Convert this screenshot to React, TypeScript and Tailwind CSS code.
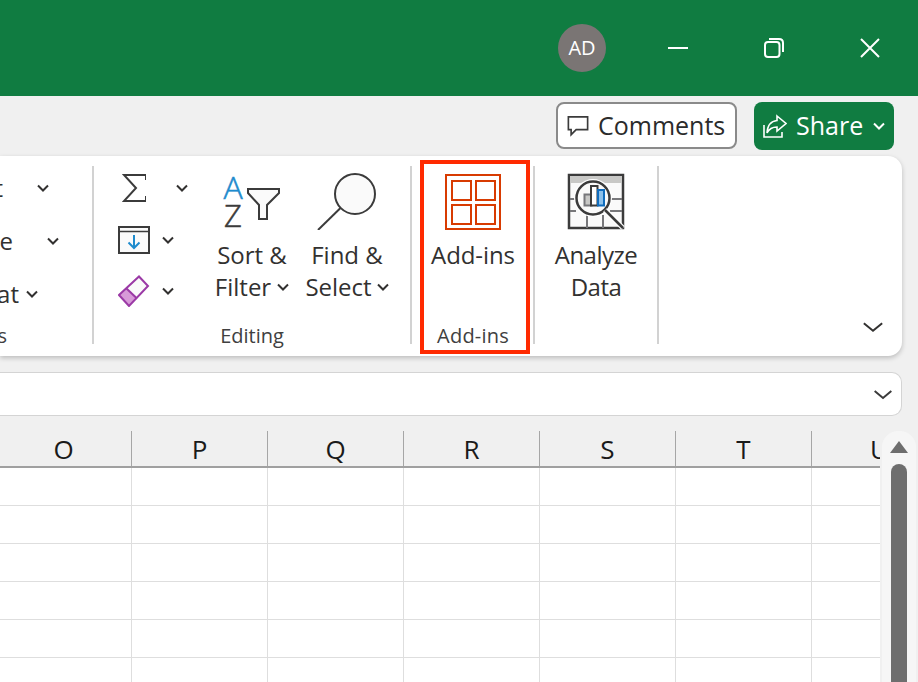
const COLS = ["O", "P", "Q", "R", "S", "T", "U"];
const ROWS = [0, 1, 2, 3, 4, 5];

function Chevron({ className = "" }: { className?: string }) {
  return (
    <svg viewBox="0 0 12 8" preserveAspectRatio="none" className={`w-3 h-2 shrink-0 ${className}`} fill="none" stroke="currentColor" strokeWidth="2">
      <path d="M1 1.5 6 6.5 11 1.5" vectorEffect="non-scaling-stroke" />
    </svg>
  );
}

function Sep() {
  return <div className="w-[2px] h-[178px] mt-[10px] shrink-0 bg-[#d2d2d2]" />;
}

function SigmaIcon() {
  return (
    <svg viewBox="0 0 24 30" className="w-6 h-[30px]" fill="none" stroke="#3b3b3b" strokeWidth="2">
      <path d="M24 7V2H2L14 15 2 28H24V23" />
    </svg>
  );
}

function FillIcon() {
  return (
    <svg viewBox="0 0 32 28" className="w-8 h-7" fill="none">
      <rect x="1" y="1" width="30" height="26" fill="#fafafa" stroke="#3b3b3b" strokeWidth="2" />
      <path d="M1 5.5H31" stroke="#3b3b3b" strokeWidth="1.5" />
      <path d="M16 9V22M10.5 16.5 16 22 21.5 16.5" stroke="#1e8bcd" strokeWidth="2" />
    </svg>
  );
}

function EraserIcon() {
  return (
    <svg viewBox="0 0 32 32" className="w-8 h-8" fill="none">
      <path d="M8 13 21 1.5 30 11 19 23Z" fill="#fafafa" />
      <path d="M1 20 8 13 19 23 11 31Z" fill="#d79ad8" />
      <path d="M1 20 21 1.5 30 11 11 31Z" stroke="#9b3aa6" strokeWidth="2" />
      <path d="M8 13 19 23.5" stroke="#9b3aa6" strokeWidth="2" />
    </svg>
  );
}

function SortIcon() {
  return (
    <svg viewBox="0 0 60 58" className="w-[60px] h-[58px]">
      <text x="11" y="27" textAnchor="middle" fontSize="32" fontWeight="300" stroke="#1e8bcd" strokeWidth="0.5" fontFamily="Open Sans, sans-serif" fill="#1e8bcd">A</text>
      <text x="11" y="55" textAnchor="middle" fontSize="31" fontWeight="300" stroke="#3b3b3b" strokeWidth="0.5" fontFamily="Open Sans, sans-serif" fill="#3b3b3b">Z</text>
      <path d="M26 17H57V21L45 33V47H37V33L26 21Z" fill="#fafafa" stroke="#3b3b3b" strokeWidth="2" />
    </svg>
  );
}

function FindIcon() {
  return (
    <svg viewBox="0 0 60 58" className="w-[60px] h-[58px]" fill="none" stroke="#3b3b3b" strokeWidth="2">
      <circle cx="38" cy="22" r="20" fill="#fafafa" />
      <path d="M23.5 36 1 58" />
    </svg>
  );
}

function AddinsIcon() {
  return (
    <svg viewBox="0 0 56 56" className="w-14 h-14" fill="none" stroke="#d83b01" strokeWidth="2">
      <rect x="1" y="1" width="54" height="54" />
      <rect x="7" y="7" width="19" height="19" />
      <rect x="31" y="7" width="19" height="19" />
      <rect x="7" y="31" width="19" height="19" />
      <rect x="31" y="31" width="19" height="19" />
    </svg>
  );
}

function AnalyzeIcon() {
  return (
    <svg viewBox="0 0 58 58" className="w-[58px] h-[58px]" fill="none">
      <rect x="2" y="2" width="54" height="53" fill="#fafafa" stroke="#3b3b3b" strokeWidth="2.5" />
      <rect x="3" y="3" width="52" height="7" fill="#c8c8c6" />
      <path d="M3 26H9M43 26H55M3 38H9M43 38H55M20 42V55M36 42V55" stroke="#77777a" strokeWidth="2" />
      <circle cx="26" cy="25" r="19" fill="#fff" />
      <circle cx="26" cy="25" r="16.5" fill="#fafafa" stroke="#3b3b3b" strokeWidth="2.5" />
      <path d="M38 37 56 55" stroke="#fff" strokeWidth="5" />
      <path d="M38 37 56 55" stroke="#3b3b3b" strokeWidth="2.5" />
      <rect x="17.5" y="21.5" width="7" height="11" fill="#c8c8c6" stroke="#77777a" strokeWidth="2" />
      <rect x="24" y="13" width="6.5" height="19.5" fill="#fff" stroke="#3b3b3b" strokeWidth="2" />
      <rect x="31" y="17" width="6" height="15.5" fill="#8cc0ea" stroke="#0f6cbd" strokeWidth="2" />
    </svg>
  );
}

function TitleBar() {
  return (
    <div className="h-24 bg-[#107c41] flex justify-end items-center text-white">
      <div className="w-24 flex justify-center">
        <div className="w-12 h-12 rounded-full bg-[#7a7574] flex items-center justify-center text-[20px]">AD</div>
      </div>
      <div className="w-24 flex justify-center">
        <div className="w-5 h-[2px] bg-white" />
      </div>
      <div className="w-24 flex justify-center">
        <svg viewBox="0 0 20 20" className="w-5 h-5" fill="none" stroke="#fff" strokeWidth="2">
          <rect x="1" y="4" width="14.5" height="15" rx="3" />
          <path d="M5 1H15C17.5 1 19 2.5 19 5V14" />
        </svg>
      </div>
      <div className="w-24 flex justify-center">
        <svg viewBox="0 0 20 20" className="w-5 h-5" fill="none" stroke="#fff" strokeWidth="2">
          <path d="M1 1 19 19M19 1 1 19" />
        </svg>
      </div>
    </div>
  );
}

function ActionRow() {
  return (
    <div className="h-[60px] flex justify-end items-start gap-[17px] pt-[6px] pr-6">
      <button className="w-[181px] h-[47px] rounded-lg border-2 border-[#8a8a8a] bg-white flex items-center gap-[9px] pl-[9px] text-[25px] text-[#2b2b2b]">
        <svg viewBox="0 0 24 24" className="w-[22px] h-[22px] shrink-0" fill="none" stroke="#3b3b3b" strokeWidth="1.8">
          <path d="M1.5 2H22.5V16H10L4.5 21.5V16H1.5Z" />
        </svg>
        Comments
      </button>
      <button className="w-[140px] h-12 rounded-lg bg-[#107c41] flex items-center pl-[9px] text-[25px] text-white">
        <svg viewBox="0 0 24 24" className="w-6 h-6 shrink-0 mr-[9px]" fill="none" stroke="#fff" strokeWidth="1.6">
          <path d="M1 11V23H19V18M14 2 23 9.5 14 17V13C9 13 6 15 4 19 4.5 12 8 7 14 6.5Z" />
        </svg>
        Share
        <Chevron className="ml-[10px]" />
      </button>
    </div>
  );
}

function LeftGroup() {
  return (
    <div className="w-[92px] shrink-0 overflow-hidden flex flex-col items-end">
      <div className="h-[156px] pt-4 flex flex-col gap-[21px] w-full">
        <div className="h-8 flex items-center justify-end gap-[34px] pr-[43px] whitespace-nowrap">
          Insert
          <Chevron />
        </div>
        <div className="h-8 flex items-center justify-end gap-[34px] pr-[33px] whitespace-nowrap">
          Delete
          <Chevron />
        </div>
        <div className="h-8 flex items-center justify-end gap-[7px] pr-[54px] whitespace-nowrap">
          Format
          <Chevron />
        </div>
      </div>
      <div className="w-full pr-[85px] flex justify-end whitespace-nowrap text-[20px] leading-5 text-[#404040] pt-[14px]">Cells</div>
    </div>
  );
}

function EditingGroup() {
  return (
    <div className="w-[316px] shrink-0 flex flex-col">
      <div className="h-[170px] flex pt-[16px]">
        <div className="w-[112px] pl-6 flex flex-col">
          <div className="h-[32px] flex items-center pl-1">
            <SigmaIcon />
            <Chevron className="ml-[30px]" />
          </div>
          <div className="h-[30px] mt-[21px] flex items-center">
            <FillIcon />
            <Chevron className="ml-[12px]" />
          </div>
          <div className="h-[32px] mt-[20px] flex items-center">
            <EraserIcon />
            <Chevron className="ml-[12px]" />
          </div>
        </div>
        <div className="w-[92px] flex flex-col items-center">
          <SortIcon />
          <div className="mt-[9px] leading-8 text-center">
            Sort &amp;
            <div className="flex items-center justify-center gap-[6px] whitespace-nowrap">
              Filter
              <Chevron />
            </div>
          </div>
        </div>
        <div className="w-[98px] flex flex-col items-center">
          <FindIcon />
          <div className="mt-[9px] leading-8 text-center">
            Find &amp;
            <div className="flex items-center justify-center gap-[5px] whitespace-nowrap">
              Select
              <Chevron />
            </div>
          </div>
        </div>
      </div>
      <div className="text-center text-[20px] leading-5 text-[#404040]">Editing</div>
    </div>
  );
}

function Ribbon() {
  return (
    <div className="w-[902px] h-[200px] bg-white rounded-r-[14px] shadow-[0_2px_5px_rgba(0,0,0,0.22)] flex text-[24px] text-[#323130]">
      <LeftGroup />
      <Sep />
      <EditingGroup />
      <Sep />
      <div className="ml-2 mt-1 w-[110px] h-[194px] shrink-0 border-4 border-[#ff2a00] flex flex-col items-center pt-[10px] pr-1">
        <AddinsIcon />
        <div className="mt-[9px] leading-8 flex-1 tracking-[-0.1px]">Add-ins</div>
        <div className="text-[20px] leading-5 tracking-[0.2px] text-[#404040] pb-1">Add-ins</div>
      </div>
      <div className="ml-[3px] shrink-0">
        <Sep />
      </div>
      <div className="w-[122px] shrink-0 flex flex-col items-center pt-[17px] text-center">
        <AnalyzeIcon />
        <div className="mt-[8px] leading-8 tracking-[-0.5px]">
          Analyze
          <br />
          Data
        </div>
      </div>
      <Sep />
      <div className="flex-1 flex justify-end items-end pr-[18px] pb-[23px]">
        <Chevron className="w-[22px] h-[12px]" />
      </div>
    </div>
  );
}

function FormulaBar() {
  return (
    <div className="w-[902px] h-[44px] mt-[16px] bg-white border border-[#d4d4d4] border-l-0 rounded-r-[10px] flex items-center justify-end pr-[8px] text-[#3b3b3b]">
      <Chevron className="w-[20px] h-[11px]" />
    </div>
  );
}

function Sheet() {
  return (
    <div className="mt-[15px] flex flex-1 min-h-0">
      <div className="w-[880px] overflow-hidden">
        <div className="flex -ml-1 w-[952px] h-[37px] border-b-2 border-[#a0a0a0] text-[26px] text-[#1a1a1a]">
          {COLS.map((c) => (
            <div key={c} className="w-[136px] shrink-0 border-r border-[#a6a6a6] flex items-center justify-center pt-[2px]">
              {c}
            </div>
          ))}
        </div>
        {ROWS.map((r) => (
          <div key={r} className="flex -ml-1 w-[952px] h-[38px] bg-white">
            {COLS.map((c) => (
              <div key={c} className="w-[136px] shrink-0 border-r border-b border-[#dedede]" />
            ))}
          </div>
        ))}
      </div>
      <div className="ml-[2px] w-[34px] rounded-t-[16px] bg-[#f6f6f6] flex flex-col items-center pt-[10px]">
        <div className="w-0 h-0 border-l-[9px] border-r-[9px] border-b-[12px] border-l-transparent border-r-transparent border-b-[#6e6e6e]" />
        <div className="w-4 flex-1 mt-[11px] rounded-t-lg bg-[#6e6e6e]" />
      </div>
    </div>
  );
}

export default function App() {
  return (
    <div className="w-[918px] h-[682px] overflow-hidden bg-[#f0f0f0] flex flex-col font-['Open_Sans',sans-serif]">
      <TitleBar />
      <ActionRow />
      <Ribbon />
      <FormulaBar />
      <Sheet />
    </div>
  );
}
